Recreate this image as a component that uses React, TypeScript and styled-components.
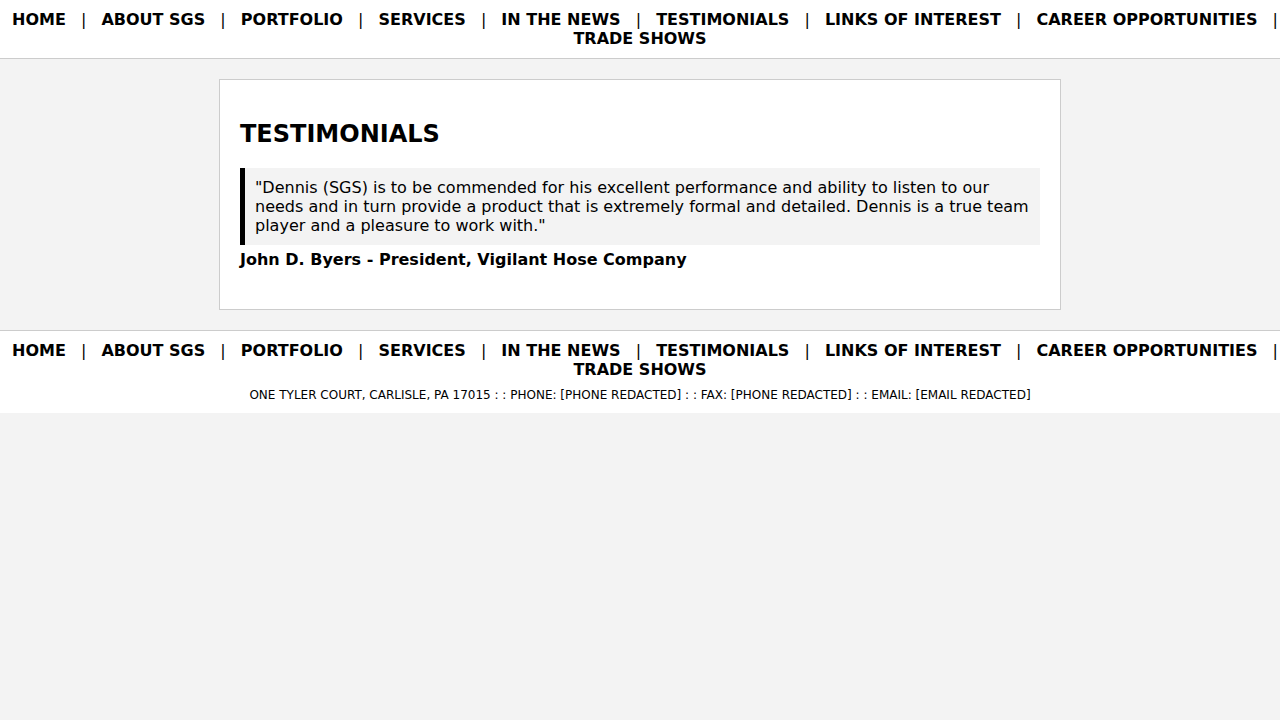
import React from "react";
import styled, { createGlobalStyle } from "styled-components";

const links = [
  "HOME",
  "ABOUT SGS",
  "PORTFOLIO",
  "SERVICES",
  "IN THE NEWS",
  "TESTIMONIALS",
  "LINKS OF INTEREST",
  "CAREER OPPORTUNITIES",
  "TRADE SHOWS",
];

const GlobalStyle = createGlobalStyle`
  html, body {
    margin: 0;
    padding: 0;
    background: #f3f3f3;
    font-family: "DejaVu Sans", sans-serif;
    color: #000;
  }
`;

const NavBar = styled.div<{ $top?: boolean }>`
  background: #fff;
  text-align: center;
  padding: 10px 0;
  font-size: 16px;
  font-weight: bold;
  line-height: 19px;
  ${(p) =>
    p.$top ? "border-bottom: 1px solid #ccc;" : "border-top: 1px solid #ccc;"}
`;

const NavLink = styled.a`
  color: #000;
  text-decoration: none;
  padding: 0 10px;
  cursor: pointer;
`;

const Sep = styled.span`
  font-weight: normal;
`;

const Card = styled.div`
  width: 800px;
  margin: 20px auto;
  padding: 20px;
  background: #fff;
  border: 1px solid #ccc;
`;

const Title = styled.h2`
  font-size: 24px;
  margin: 20px 0;
  line-height: 28px;
`;

const Quote = styled.blockquote`
  margin: 0;
  padding: 10px;
  background: #f3f3f3;
  border-left: 5px solid #000;
  font-size: 16px;
  line-height: 19px;
`;

const Author = styled.p`
  margin: 5px 0 20px;
  font-weight: bold;
  font-size: 16px;
  line-height: 19px;
`;

const Address = styled.div`
  margin-top: 9px;
  font-size: 12px;
  font-weight: normal;
  line-height: 15px;
`;

const Nav = () => (
  <>
    {links.map((l, i) => (
      <React.Fragment key={l}>
        <NavLink>{l}</NavLink>
        {i < links.length - 1 && <Sep> | </Sep>}
      </React.Fragment>
    ))}
  </>
);

export default function App() {
  return (
    <>
      <GlobalStyle />
      <NavBar $top>
        <Nav />
      </NavBar>
      <Card>
        <Title>TESTIMONIALS</Title>
        <Quote>
          "Dennis (SGS) is to be commended for his excellent performance and
          ability to listen to our needs and in turn provide a product that is
          extremely formal and detailed. Dennis is a true team player and a
          pleasure to work with."
        </Quote>
        <Author>John D. Byers - President, Vigilant Hose Company</Author>
      </Card>
      <NavBar>
        <Nav />
        <Address>
          ONE TYLER COURT, CARLISLE, PA 17015 : : PHONE: [PHONE REDACTED] : :
          FAX: [PHONE REDACTED] : : EMAIL: [EMAIL REDACTED]
        </Address>
      </NavBar>
    </>
  );
}
